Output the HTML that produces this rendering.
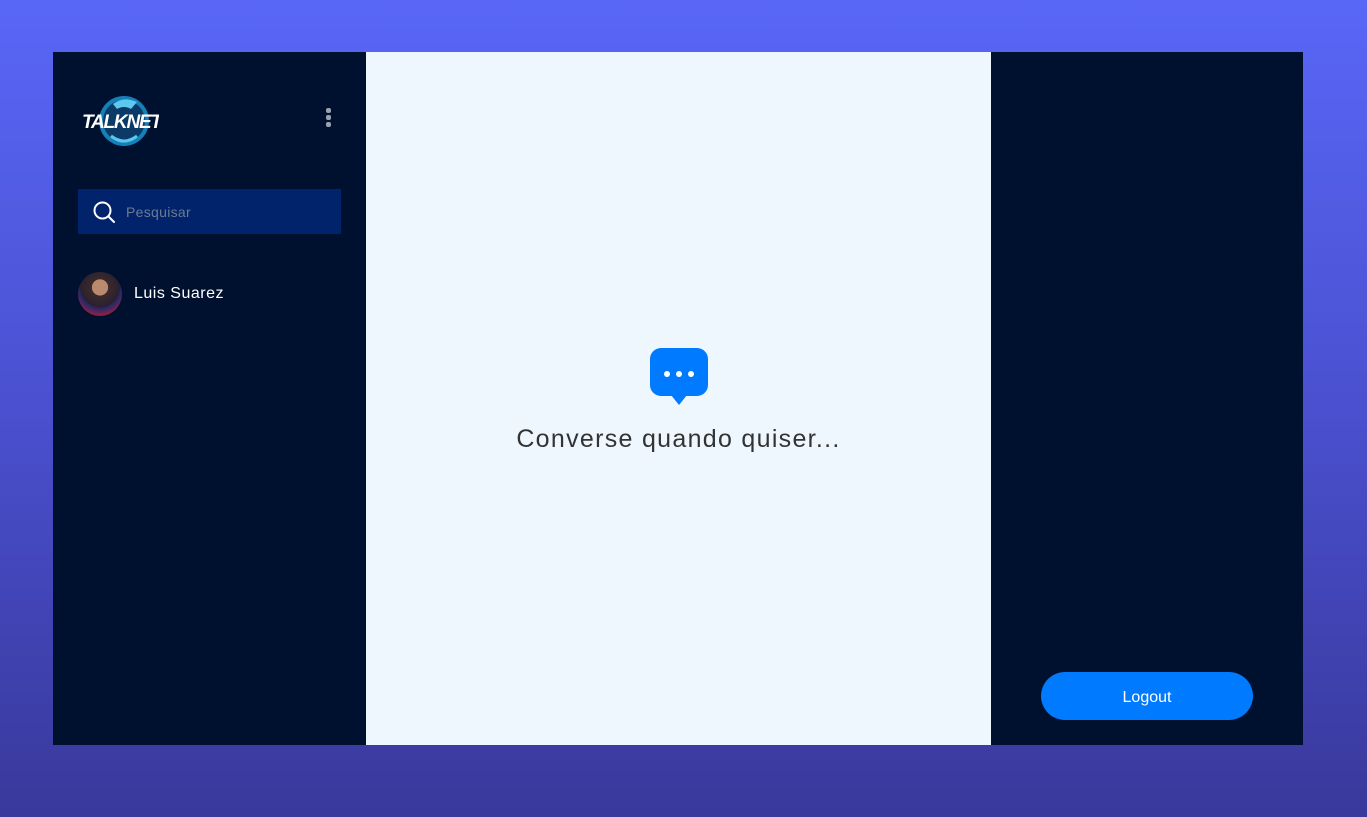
<!DOCTYPE html>
<html><head><meta charset="utf-8">
<style>
*{margin:0;padding:0;box-sizing:border-box}
body{width:1367px;height:817px;overflow:hidden;background:linear-gradient(180deg,#5967f7 0%,#4a50cf 50%,#39389b 100%);font-family:"Liberation Sans",sans-serif;position:relative}
.app{position:absolute;left:53px;top:52px;width:1250px;height:693px;display:flex}
.left{width:313px;background:#00112f;position:relative}
.mid{width:625px;background:#eff7fe;position:relative}
.right{width:312px;background:#00112f;position:relative}
.logo{position:absolute;left:28px;top:42px;width:78px;height:54px}
.dots{position:absolute;left:273px;top:56px}
.dots i{display:block;width:5px;height:5px;border-radius:2px;background:#9aa0ad;margin-bottom:2px}
.search{position:absolute;left:25px;top:137px;width:263px;height:45px;background:#00236b;display:flex;align-items:center}
.search span{color:#6d7a92;font-size:14px;margin-left:10px;letter-spacing:.3px}
.user{position:absolute;left:25px;top:220px;display:flex;align-items:center}
.av{width:44px;height:44px;border-radius:50%;background:radial-gradient(circle at 50% 35%,#b98a70 0 22%,#3a2a2a 23%,#2a2030 55%,#1c2a6a 56%,#9a2040 80%,#2a2040 100%)}
.user span{color:#fff;font-size:16px;margin-left:12px;letter-spacing:.5px}
.chat{position:absolute;left:284px;top:296px}
.msg{position:absolute;left:0;width:625px;top:373px;text-align:center;font-size:25px;color:#333;letter-spacing:1.3px}
.logout{position:absolute;left:50px;top:620px;width:212px;height:48px;border-radius:24px;background:#007bff;color:#fff;font-size:16px;display:flex;align-items:center;justify-content:center;padding-top:3px}
</style></head><body>
<div class="app">
 <div class="left">
  <div class="logo">
   <svg width="78" height="54" viewBox="0 0 78 54">
    <circle cx="43" cy="27" r="25" fill="#1580b8"/>
    <circle cx="43" cy="27" r="21" fill="#0c3a66"/>
    <path d="M32 10 Q43 2 56 8 L50 15 Q43 11 36 15Z" fill="#5cc8f0"/>
    <path d="M30 42 Q43 52 56 42" stroke="#5cc8f0" stroke-width="3" fill="none"/>
    <text x="1" y="34" font-family="Liberation Sans" font-weight="bold" font-size="19" fill="#fff" font-style="italic" letter-spacing="-1.2">TALKNET</text>
   </svg>
  </div>
  <div class="dots"><i></i><i></i><i></i></div>
  <div class="search">
   <svg width="24" height="24" viewBox="0 0 24 24" style="margin-left:14px"><circle cx="10.5" cy="10.5" r="8" stroke="#fff" stroke-width="2" fill="none"/><path d="M16.5 16.5L22 22" stroke="#fff" stroke-width="2" stroke-linecap="round"/></svg>
   <span>Pesquisar</span>
  </div>
  <div class="user"><div class="av"></div><span>Luis Suarez</span></div>
 </div>
 <div class="mid">
  <div class="chat">
   <svg width="58" height="58" viewBox="0 0 58 58"><rect x="0" y="0" width="58" height="48" rx="11" fill="#007bff"/><path d="M21 47 L29 57 L37 47Z" fill="#007bff"/><circle cx="17" cy="26" r="3" fill="#fff"/><circle cx="29" cy="26" r="3" fill="#fff"/><circle cx="41" cy="26" r="3" fill="#fff"/></svg>
  </div>
  <div class="msg">Converse quando quiser...</div>
 </div>
 <div class="right">
  <div class="logout">Logout</div>
 </div>
</div>
</body></html>
